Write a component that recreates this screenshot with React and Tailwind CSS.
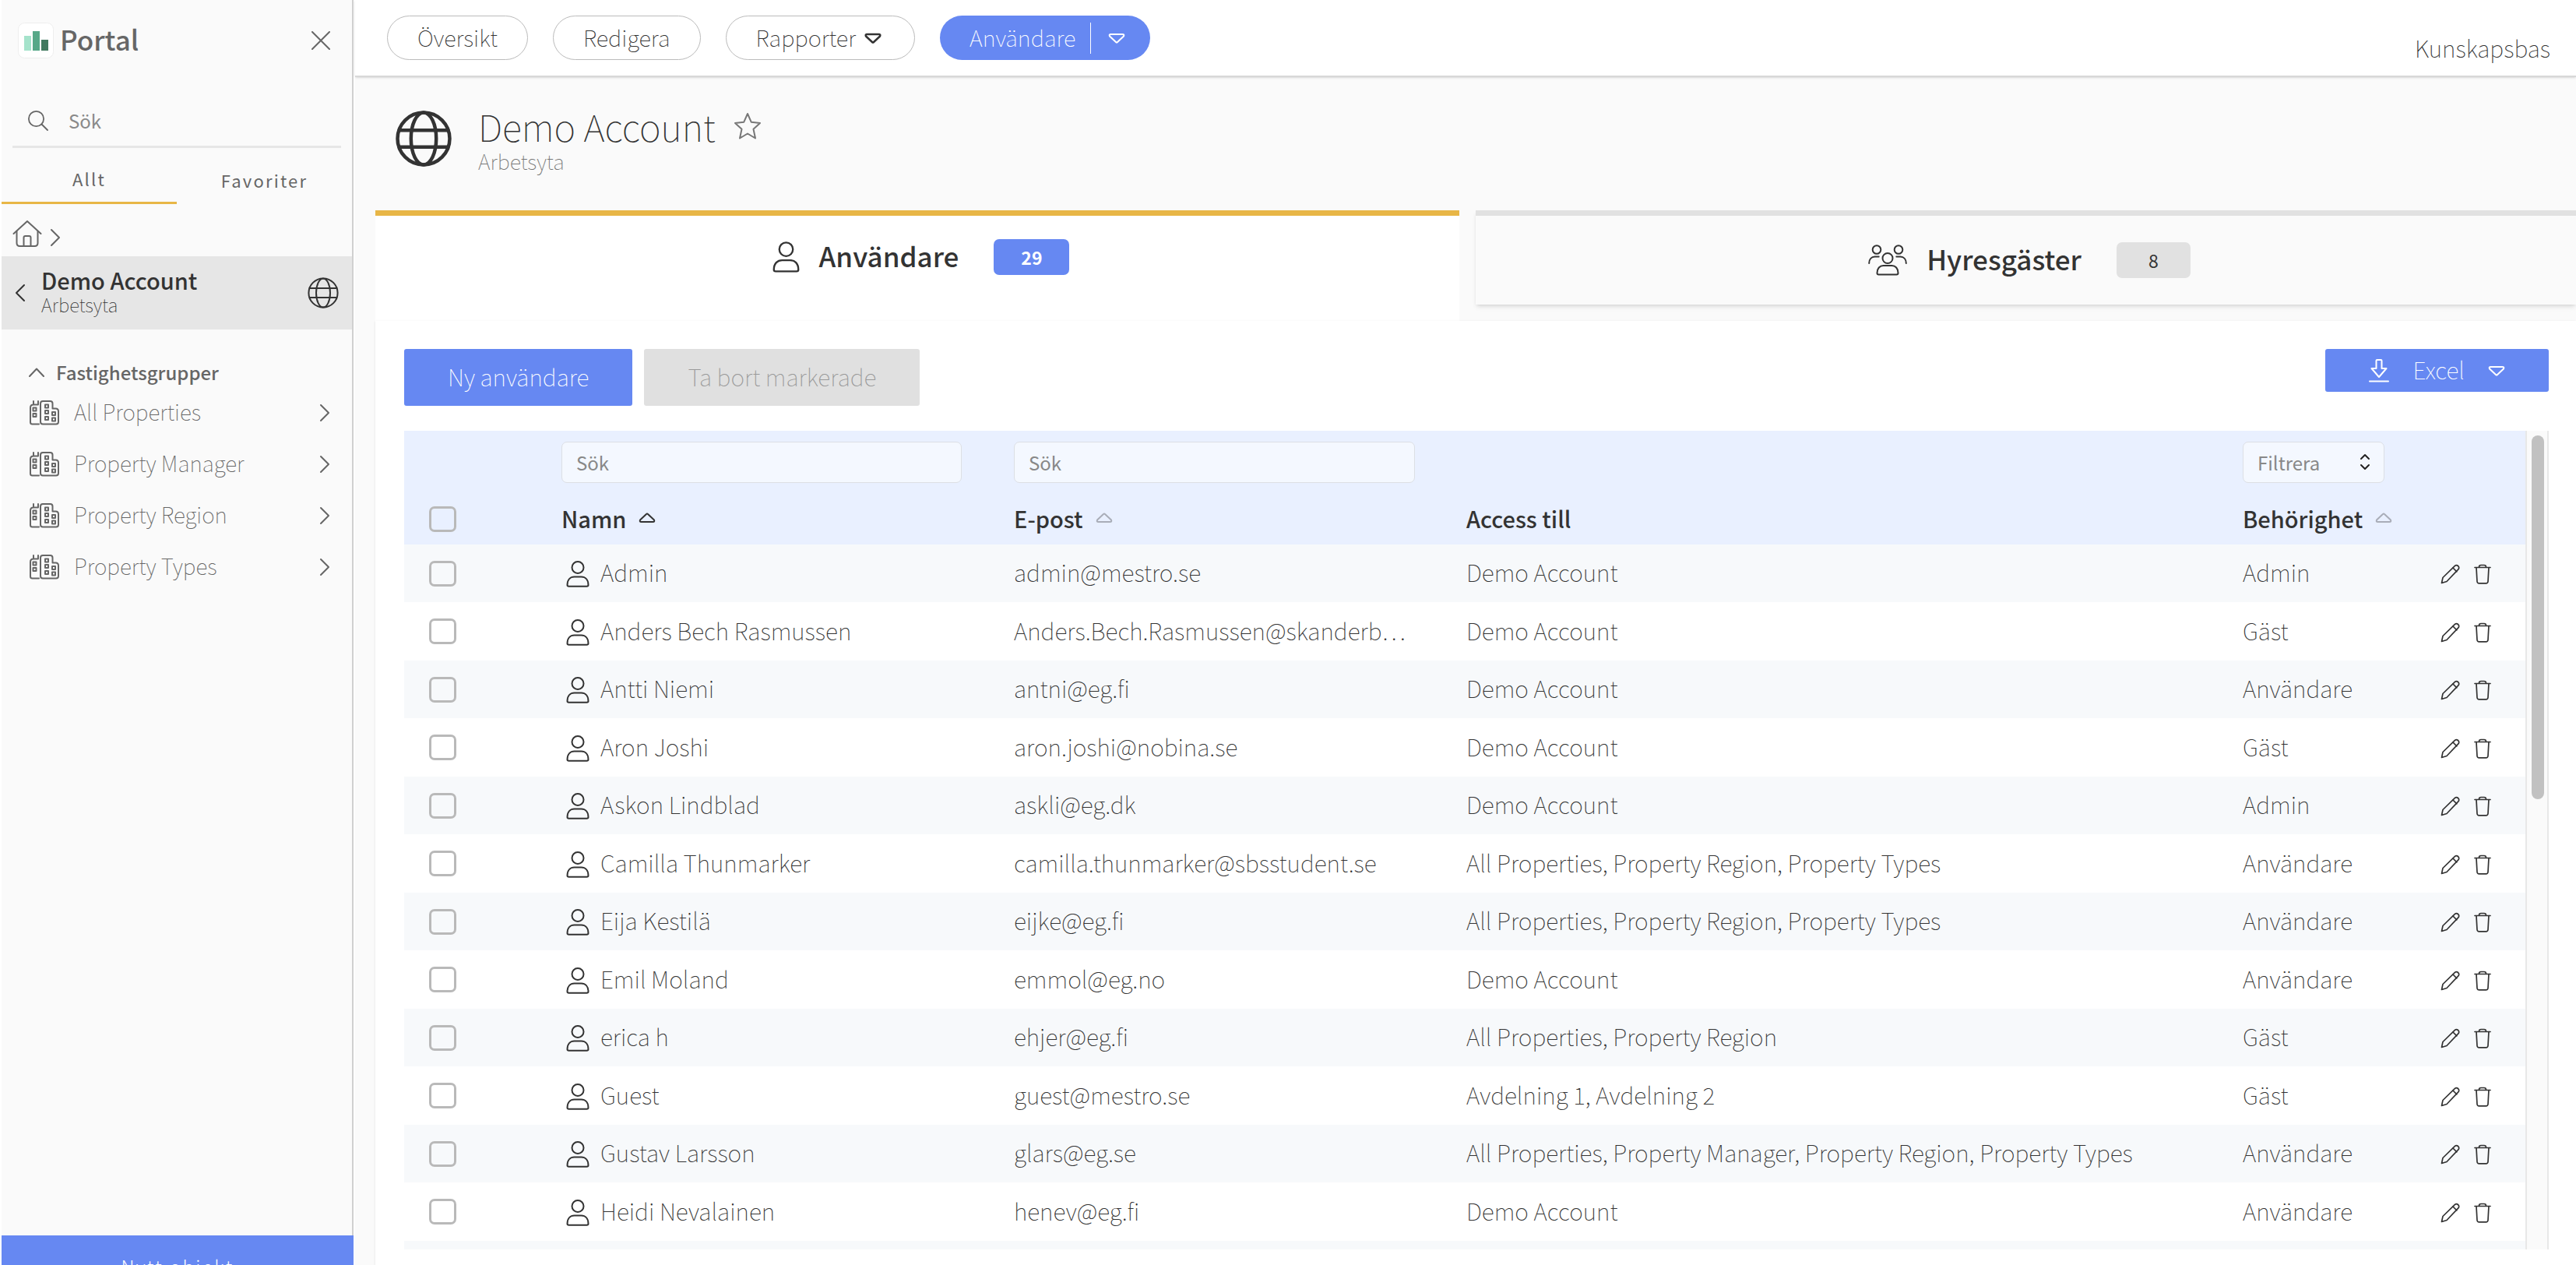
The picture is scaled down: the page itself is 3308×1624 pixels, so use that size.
import { useState } from 'react';

const users = [
  { name: 'Admin', email: 'admin@mestro.se', access: 'Demo Account', role: 'Admin' },
  { name: 'Anders Bech Rasmussen', email: 'Anders.Bech.Rasmussen@skanderb…', access: 'Demo Account', role: 'Gäst' },
  { name: 'Antti Niemi', email: 'antni@eg.fi', access: 'Demo Account', role: 'Användare' },
  { name: 'Aron Joshi', email: 'aron.joshi@nobina.se', access: 'Demo Account', role: 'Gäst' },
  { name: 'Askon Lindblad', email: 'askli@eg.dk', access: 'Demo Account', role: 'Admin' },
  { name: 'Camilla Thunmarker', email: 'camilla.thunmarker@sbsstudent.se', access: 'All Properties, Property Region, Property Types', role: 'Användare' },
  { name: 'Eija Kestilä', email: 'eijke@eg.fi', access: 'All Properties, Property Region, Property Types', role: 'Användare' },
  { name: 'Emil Moland', email: 'emmol@eg.no', access: 'Demo Account', role: 'Användare' },
  { name: 'erica h', email: 'ehjer@eg.fi', access: 'All Properties, Property Region', role: 'Gäst' },
  { name: 'Guest', email: 'guest@mestro.se', access: 'Avdelning 1, Avdelning 2', role: 'Gäst' },
  { name: 'Gustav Larsson', email: 'glars@eg.se', access: 'All Properties, Property Manager, Property Region, Property Types', role: 'Användare' },
  { name: 'Heidi Nevalainen', email: 'henev@eg.fi', access: 'Demo Account', role: 'Användare' },
];

const groups = ['All Properties', 'Property Manager', 'Property Region', 'Property Types'];

const stroke = {
  fill: 'none',
  stroke: 'currentColor',
  strokeLinecap: 'round',
  strokeLinejoin: 'round',
  'aria-hidden': true,
};

function Globe({ className, strokeWidth = 2 }) {
  return (
    <svg viewBox="0 0 40 40" className={className} {...stroke} strokeWidth={strokeWidth}>
      <circle cx="20" cy="20" r="18.6" />
      <ellipse cx="20" cy="20" rx="9" ry="18.6" />
      <path d="M2.5 14h35M2.5 26h35" />
    </svg>
  );
}

function Chevron({ className, d = 'M2 2l10 10L2 22' }) {
  return (
    <svg viewBox="0 0 14 24" className={className} {...stroke} strokeWidth="2">
      <path d={d} />
    </svg>
  );
}

function Triangle({ className, up = false, strokeWidth = 2 }) {
  return (
    <svg viewBox="0 0 22 14" className={className} {...stroke} strokeWidth={strokeWidth}>
      {up ? (
        <path d="M10 2L2 9.500Q1 12 3.500 12h15Q21 12 20 9.500L12 2Q11 1 10 2z" />
      ) : (
        <path d="M10 12L2 4.500Q1 2 3.500 2h15Q21 2 20 4.500L12 12Q11 13 10 12z" />
      )}
    </svg>
  );
}

function UserIcon({ className }) {
  return (
    <svg viewBox="0 0 30 34" className={className} {...stroke} strokeWidth="2">
      <circle cx="15" cy="8.500" r="7.500" />
      <path d="M1.500 31c0-7 4-10.500 9-10.500h9c5 0 9 3.500 9 10.500q0 1.800-2 1.800h-23q-2 0-2-1.800z" />
    </svg>
  );
}

function PeopleIcon({ className }) {
  return (
    <svg viewBox="0 0 50 40" className={className} {...stroke} strokeWidth="2">
      <circle cx="11" cy="6.500" r="5.300" />
      <circle cx="39" cy="6.500" r="5.300" />
      <circle cx="25" cy="17.500" r="6.500" />
      <path d="M1.200 24c0-5 3-8.500 7.500-8.500h5M48.800 24c0-5-3-8.500-7.500-8.500h-5" />
      <path d="M11.500 36.500c0-6 3.500-9.500 8-9.500h11c4.500 0 8 3.500 8 9.500q0 2-2 2h-23q-2 0-2-2z" />
    </svg>
  );
}

function BuildingIcon({ className }) {
  return (
    <svg viewBox="0 0 38 32" className={className} {...stroke} strokeWidth="2">
      <path d="M11 1v4.500M5 1v4.500h6M5 5.500q-4 0-4 4V28q0 2.500 2.500 2.500H12" />
      <rect x="4.500" y="9.500" width="4" height="4" />
      <rect x="4.500" y="17" width="4" height="4" />
      <path d="M14 4q0-3 3-3h9.500q3 0 3 3v6.500h4q3.500 0 3.500 3.500v13.500q0 3-3 3H17q-3 0-3-3z" />
      <rect x="20" y="5.500" width="4" height="4" />
      <rect x="20" y="13" width="4" height="4" />
      <rect x="20" y="21" width="4" height="4" />
      <rect x="29" y="15" width="4" height="4" />
      <rect x="29" y="22.500" width="4" height="4" />
    </svg>
  );
}

function SortHeader({ label, active = false }) {
  return (
    <button type="button" className="flex items-center gap-4 font-medium">
      {label}
      <Triangle up className={active ? 'h-[14px] w-[22px]' : 'h-[14px] w-[22px] text-[#a9adb8]'} />
    </button>
  );
}

function Checkbox({ label }) {
  return (
    <input
      type="checkbox"
      aria-label={label}
      className="block h-[33px] w-[35px] appearance-none rounded-[7px] border-3 border-[#b9b9b9] checked:bg-[#6688f2]"
    />
  );
}

function Sidebar() {
  const [tab, setTab] = useState('all');

  return (
    <aside className="ml-[2px] flex w-[452px] shrink-0 flex-col border-r-2 border-[#d0d0d0] bg-[#fafafa] text-[#666]">
      <div className="flex h-[98px] items-center pt-[6px] pr-[28px] pl-[21px]">
        <svg viewBox="0 0 46 46" className="h-[46px] w-[46px]" aria-hidden="true">
          <rect x="0.500" y="0.500" width="45" height="45" rx="8" fill="#fff" stroke="#eee" />
          <path fill="#a5e3cb" d="M8 17h9v19H8z" />
          <path fill="#57a888" d="M19 11h9v25h-9z" />
          <path fill="#41795f" d="M30 22h9v14h-9z" />
        </svg>
        <span className="ml-[8px] pb-[4px] text-[35px] leading-[48px] font-medium">Portal</span>
        <button type="button" aria-label="Stäng" className="ml-auto">
          <svg viewBox="0 0 24 24" className="h-[24px] w-[24px]" {...stroke} strokeWidth="2">
            <path d="M1 1l22 22M23 1L1 23" />
          </svg>
        </button>
      </div>

      <label className="mx-[14px] mt-[24px] flex h-[68px] items-center gap-[26px] border-b-3 border-[#e6e6e6] pl-[20px]">
        <svg viewBox="0 0 26 26" className="h-[26px] w-[26px] shrink-0" {...stroke} strokeWidth="1.800">
          <circle cx="10.500" cy="10.500" r="9.600" />
          <path d="M17.500 17.500L25 25" />
        </svg>
        <input
          type="text"
          placeholder="Sök"
          aria-label="Sök"
          className="w-full bg-transparent text-[24px] leading-[36px] outline-none placeholder:text-[#8a8a8a]"
        />
      </label>

      <div className="grid h-[72px] grid-cols-2 text-[22px] leading-[32px] tracking-widest">
        <button
          type="button"
          onClick={() => setTab('all')}
          className={tab === 'all' ? 'border-b-3 border-[#e8b646] pt-[8px]' : 'pt-[10px]'}
        >
          Allt
        </button>
        <button
          type="button"
          onClick={() => setTab('fav')}
          className={tab === 'fav' ? 'border-b-3 border-[#e8b646] pt-[8px]' : 'pt-[10px]'}
        >
          Favoriter
        </button>
      </div>

      <div className="flex h-[67px] items-center gap-[10px] pt-[8px] pl-[14px]">
        <svg viewBox="0 0 38 36" className="h-[36px] w-[38px]" {...stroke} strokeWidth="2">
          <path d="M1.500 18L19 2l17.500 16" />
          <path d="M5.500 15v15q0 4 4 4h19q4 0 4-4V15" />
          <path d="M14.500 34V23q0-2 2-2h5q2 0 2 2v11" />
        </svg>
        <Chevron className="mt-[10px] h-[24px] w-[14px]" />
      </div>

      <div className="flex h-[94px] items-center bg-[#e6e6e6] pr-[17px] pl-[17px] text-[#333]">
        <Chevron className="h-[24px] w-[14px]" d="M12 2L2 12l10 10" />
        <div className="ml-[20px] pb-[5px]">
          <div className="text-[29px] leading-[34px] font-medium">Demo Account</div>
          <div className="text-[24px] leading-[30px] font-thin">Arbetsyta</div>
        </div>
        <Globe className="ml-auto h-[40px] w-[40px]" />
      </div>

      <nav className="mt-[36px] flex-1 overflow-hidden">
        <button type="button" className="flex h-[38px] items-center gap-[15px] pl-[35px] text-[24px] leading-[38px] font-medium">
          <svg viewBox="0 0 20 12" className="h-[12px] w-[20px]" {...stroke} strokeWidth="2">
            <path d="M1 11l9-9.500L19 11" />
          </svg>
          Fastighetsgrupper
        </button>
        <ul>
          {groups.map((group) => (
            <li key={group}>
              <a href="#" className="flex h-[66px] items-center pr-[28px] pl-[36px] text-[28px] leading-[40px] font-thin">
                <BuildingIcon className="h-[32px] w-[38px]" />
                <span className="ml-[19px] pb-[4px]">{group}</span>
                <Chevron className="ml-auto h-[24px] w-[14px]" />
              </a>
            </li>
          ))}
        </ul>
      </nav>

      {/* the button runs past the bottom edge of the window */}
      <div className="-mr-[2px] h-[38px] shrink-0">
        <button type="button" className="h-[80px] w-full bg-[#6688f2] text-[24px] leading-[32px] font-light tracking-widest text-white">
          Nytt objekt
        </button>
      </div>
    </aside>
  );
}

function TopBar() {
  return (
    <header className="z-10 flex h-[99px] shrink-0 items-center justify-between border-b-2 border-[#d8d8d8] bg-white pr-[33px] pl-[41px] leading-[40px] font-thin shadow-sm">
      <div className="flex gap-8 text-[29px]">
        <button type="button" className="h-[57px] rounded-full border border-[#bbb] px-[38px] pb-[4px]">Översikt</button>
        <button type="button" className="h-[57px] rounded-full border border-[#bbb] px-[38px] pb-[4px]">Redigera</button>
        <button type="button" className="flex h-[57px] items-center gap-[11px] rounded-full border border-[#bbb] pr-[42px] pl-[38px]">
          <span className="pb-[4px]">Rapporter</span>
          <Triangle className="h-[14px] w-[22px]" strokeWidth={2.5} />
        </button>
        <div className="flex h-[57px] items-center rounded-full bg-[#6688f2] text-white">
          <button type="button" className="pr-[19px] pb-[4px] pl-[38px]">Användare</button>
          <button type="button" aria-label="Fler val" className="flex h-[40px] items-center border-l border-white pr-[32px] pl-[22px]">
            <Triangle className="h-[14px] w-[22px]" />
          </button>
        </div>
      </div>
      <a href="#" className="mt-[25px] text-[30px]">Kunskapsbas</a>
    </header>
  );
}

function Tabs() {
  return (
    <div className="grid h-[142px] shrink-0 grid-cols-2" role="tablist">
      <button
        type="button"
        role="tab"
        aria-selected="true"
        className="mr-[21px] flex items-start justify-center border-t-7 border-[#e8b646] bg-white pt-[30px] pl-[9px]"
      >
        <span className="flex h-[46px] items-center">
          <UserIcon className="h-[40px] w-[35px]" />
          <span className="ml-[25px] pb-[4px] text-[35px] leading-[46px] font-medium">Användare</span>
          <span className="ml-[45px] w-[97px] rounded-[7px] bg-[#6688f2] text-center text-[23px] leading-[46px] font-bold text-white">29</span>
        </span>
      </button>
      <button
        type="button"
        role="tab"
        aria-selected="false"
        className="flex h-[121px] items-start justify-center border-t-7 border-[#e1e1e1] bg-[#fafafa] pt-[34px] pl-[9px] shadow-md"
      >
        <span className="flex h-[46px] items-center">
          <PeopleIcon className="h-[40px] w-[50px]" />
          <span className="ml-[25px] pb-[4px] text-[35px] leading-[46px] font-medium">Hyresgäster</span>
          <span className="ml-[45px] w-[95px] rounded-[7px] bg-[#e1e1e1] text-center text-[23px] leading-[46px]">8</span>
        </span>
      </button>
    </div>
  );
}

function UserTable() {
  return (
    <div className="flex min-h-0 flex-1">
      <div className="min-w-0 flex-1 overflow-hidden">
        <table className="w-full table-fixed text-left text-[30px] leading-[40px] font-thin">
          <colgroup>
            <col className="w-[202px]" />
            <col className="w-[581px]" />
            <col className="w-[581px]" />
            <col />
            <col className="w-[254px]" />
            <col className="w-[109px]" />
          </colgroup>
          <thead className="bg-[#e9f0ff] text-[29px]">
            <tr className="h-[81px] align-bottom">
              <td />
              <td className="pr-[67px] pb-[14px]">
                <input type="text" placeholder="Sök" aria-label="Sök namn" className="block h-[53px] w-full rounded-[7px] border border-[#dcdfe4] bg-[#f4f8ff] px-[18px] text-[24px] font-normal placeholder:text-[#888]" />
              </td>
              <td className="pr-[66px] pb-[14px]">
                <input type="text" placeholder="Sök" aria-label="Sök e-post" className="block h-[53px] w-full rounded-[7px] border border-[#dcdfe4] bg-[#f4f8ff] px-[18px] text-[24px] font-normal placeholder:text-[#888]" />
              </td>
              <td />
              <td className="pb-[14px]">
                <div className="relative w-[182px]">
                  <select aria-label="Filtrera behörighet" className="block h-[53px] w-full appearance-none rounded-[7px] border border-[#dcdfe4] bg-[#f4f8ff] pl-[18px] text-[24px] font-normal text-[#888]">
                    <option>Filtrera</option>
                  </select>
                  <svg viewBox="0 0 14 22" className="pointer-events-none absolute top-[15px] right-[18px] h-[22px] w-[14px] text-[#222]" {...stroke} strokeWidth="2">
                    <path d="M2 7l5-5 5 5M2 15l5 5 5-5" />
                  </svg>
                </div>
              </td>
              <td />
            </tr>
            <tr className="h-[65px]">
              <th className="pl-[32px]"><Checkbox label="Markera alla" /></th>
              <th className="pb-[4px] font-medium"><SortHeader label="Namn" active /></th>
              <th className="pb-[4px] font-medium"><SortHeader label="E-post" /></th>
              <th className="pb-[4px] font-medium">Access till</th>
              <th className="pb-[4px] font-medium"><SortHeader label="Behörighet" /></th>
              <th />
            </tr>
          </thead>
          <tbody>
            {users.map((user) => (
              <tr key={user.email} className="whitespace-nowrap odd:h-[74px] odd:bg-[#f7f9fb] even:h-[75px]">
                <td className="pl-[32px]"><Checkbox label={`Markera ${user.name}`} /></td>
                <td>
                  <div className="flex items-center gap-[14px] pl-[6px]">
                    <UserIcon className="mt-[2px] h-[34px] w-[30px]" />
                    <span className="pb-[4px]">{user.name}</span>
                  </div>
                </td>
                <td className="pb-[4px]">{user.email}</td>
                <td className="pb-[4px]">{user.access}</td>
                <td className="pb-[4px]">{user.role}</td>
                <td>
                  <div className="flex items-center gap-[17px] pt-[2px]">
                    <button type="button" aria-label="Redigera">
                      <svg viewBox="0 0 26 26" className="block h-[26px] w-[26px]" {...stroke} strokeWidth="1.700">
                        <path d="M1.500 24.500L3 17.500 18.500 2.300q2-1.600 4 .2t.6 4.200L8 22.500z" />
                        <path d="M16 5l4.800 4.800" />
                      </svg>
                    </button>
                    <button type="button" aria-label="Ta bort">
                      <svg viewBox="0 0 22 26" className="block h-[26px] w-[22px]" {...stroke} strokeWidth="1.700">
                        <path d="M1 4.500h20M6.500 4q0-2.500 2.500-2.500h4q2.500 0 2.500 2.500M3 4.500l1 18q.2 2.300 2.500 2.300h9q2.300 0 2.500-2.300l1-18" />
                      </svg>
                    </button>
                  </div>
                </td>
              </tr>
            ))}
            <tr className="h-[74px] bg-[#f7f9fb]">
              <td colSpan={6} />
            </tr>
          </tbody>
        </table>
      </div>
      <div className="w-[30px] shrink-0 border-x-2 border-[#e8e8e8] bg-[#fafafa] pt-[6px] pl-[6px]">
        <div className="h-[467px] w-[16px] rounded-full bg-[#c1c1c1]" />
      </div>
    </div>
  );
}

export default function App() {
  return (
    <div className="flex h-screen overflow-hidden bg-white font-['Noto_Sans_CJK_KR','Noto_Sans',sans-serif] text-[#333]">
      <Sidebar />
      <main className="ml-[2px] flex min-w-0 flex-1 flex-col bg-[#fafafa]">
        <TopBar />
        <div className="flex h-[171px] shrink-0 items-start pt-[43px] pl-[52px]">
          <Globe className="h-[72px] w-[72px]" strokeWidth={2.5} />
          <div className="ml-[34px] -mt-[10px]">
            <div className="flex items-center gap-[23px]">
              <h1 className="text-[47px] leading-[60px] font-thin">Demo Account</h1>
              <button type="button" aria-label="Favorit">
                <svg viewBox="0 0 36 36" className="block h-[36px] w-[36px] text-[#777]" {...stroke} strokeWidth="2">
                  <path d="M18 2l4.700 10.700L34 14l-8.500 7.700L28 33.500l-10-6-10 6 2.500-11.800L2 14l11.300-1.300z" />
                </svg>
              </button>
            </div>
            <div className="text-[27px] leading-[30px] font-thin text-[#777]">Arbetsyta</div>
          </div>
        </div>
        <div className="flex min-h-0 flex-1 flex-col pl-[26px]">
          <Tabs />
          <section className="flex min-h-0 flex-1 flex-col bg-white pt-[36px] pr-[35px] pb-[20px] pl-[37px] shadow-sm">
            <div className="mb-8 flex items-start gap-[15px] text-[30px] leading-[40px] font-thin">
              <button type="button" className="h-[73px] rounded-[3px] bg-[#6688f2] px-[56px] pb-[4px] text-white">Ny användare</button>
              <button type="button" disabled className="h-[73px] rounded-[3px] bg-[#e0e0e0] px-[56px] pb-[4px] text-[#999]">Ta bort markerade</button>
              <button type="button" className="ml-auto flex h-[55px] items-center rounded-[3px] bg-[#6688f2] px-[56px] text-white">
                <svg viewBox="0 0 26 30" className="h-[30px] w-[26px]" {...stroke} strokeWidth="2">
                  <path d="M9.500 2q0-1 1-1h5q1 0 1 1v10h6L13 23 3.500 12h6zM1 28.500h24" />
                </svg>
                <span className="mr-[30px] ml-[30px] pb-[4px]">Excel</span>
                <Triangle className="h-[14px] w-[22px]" />
              </button>
            </div>
            <UserTable />
          </section>
        </div>
      </main>
    </div>
  );
}
